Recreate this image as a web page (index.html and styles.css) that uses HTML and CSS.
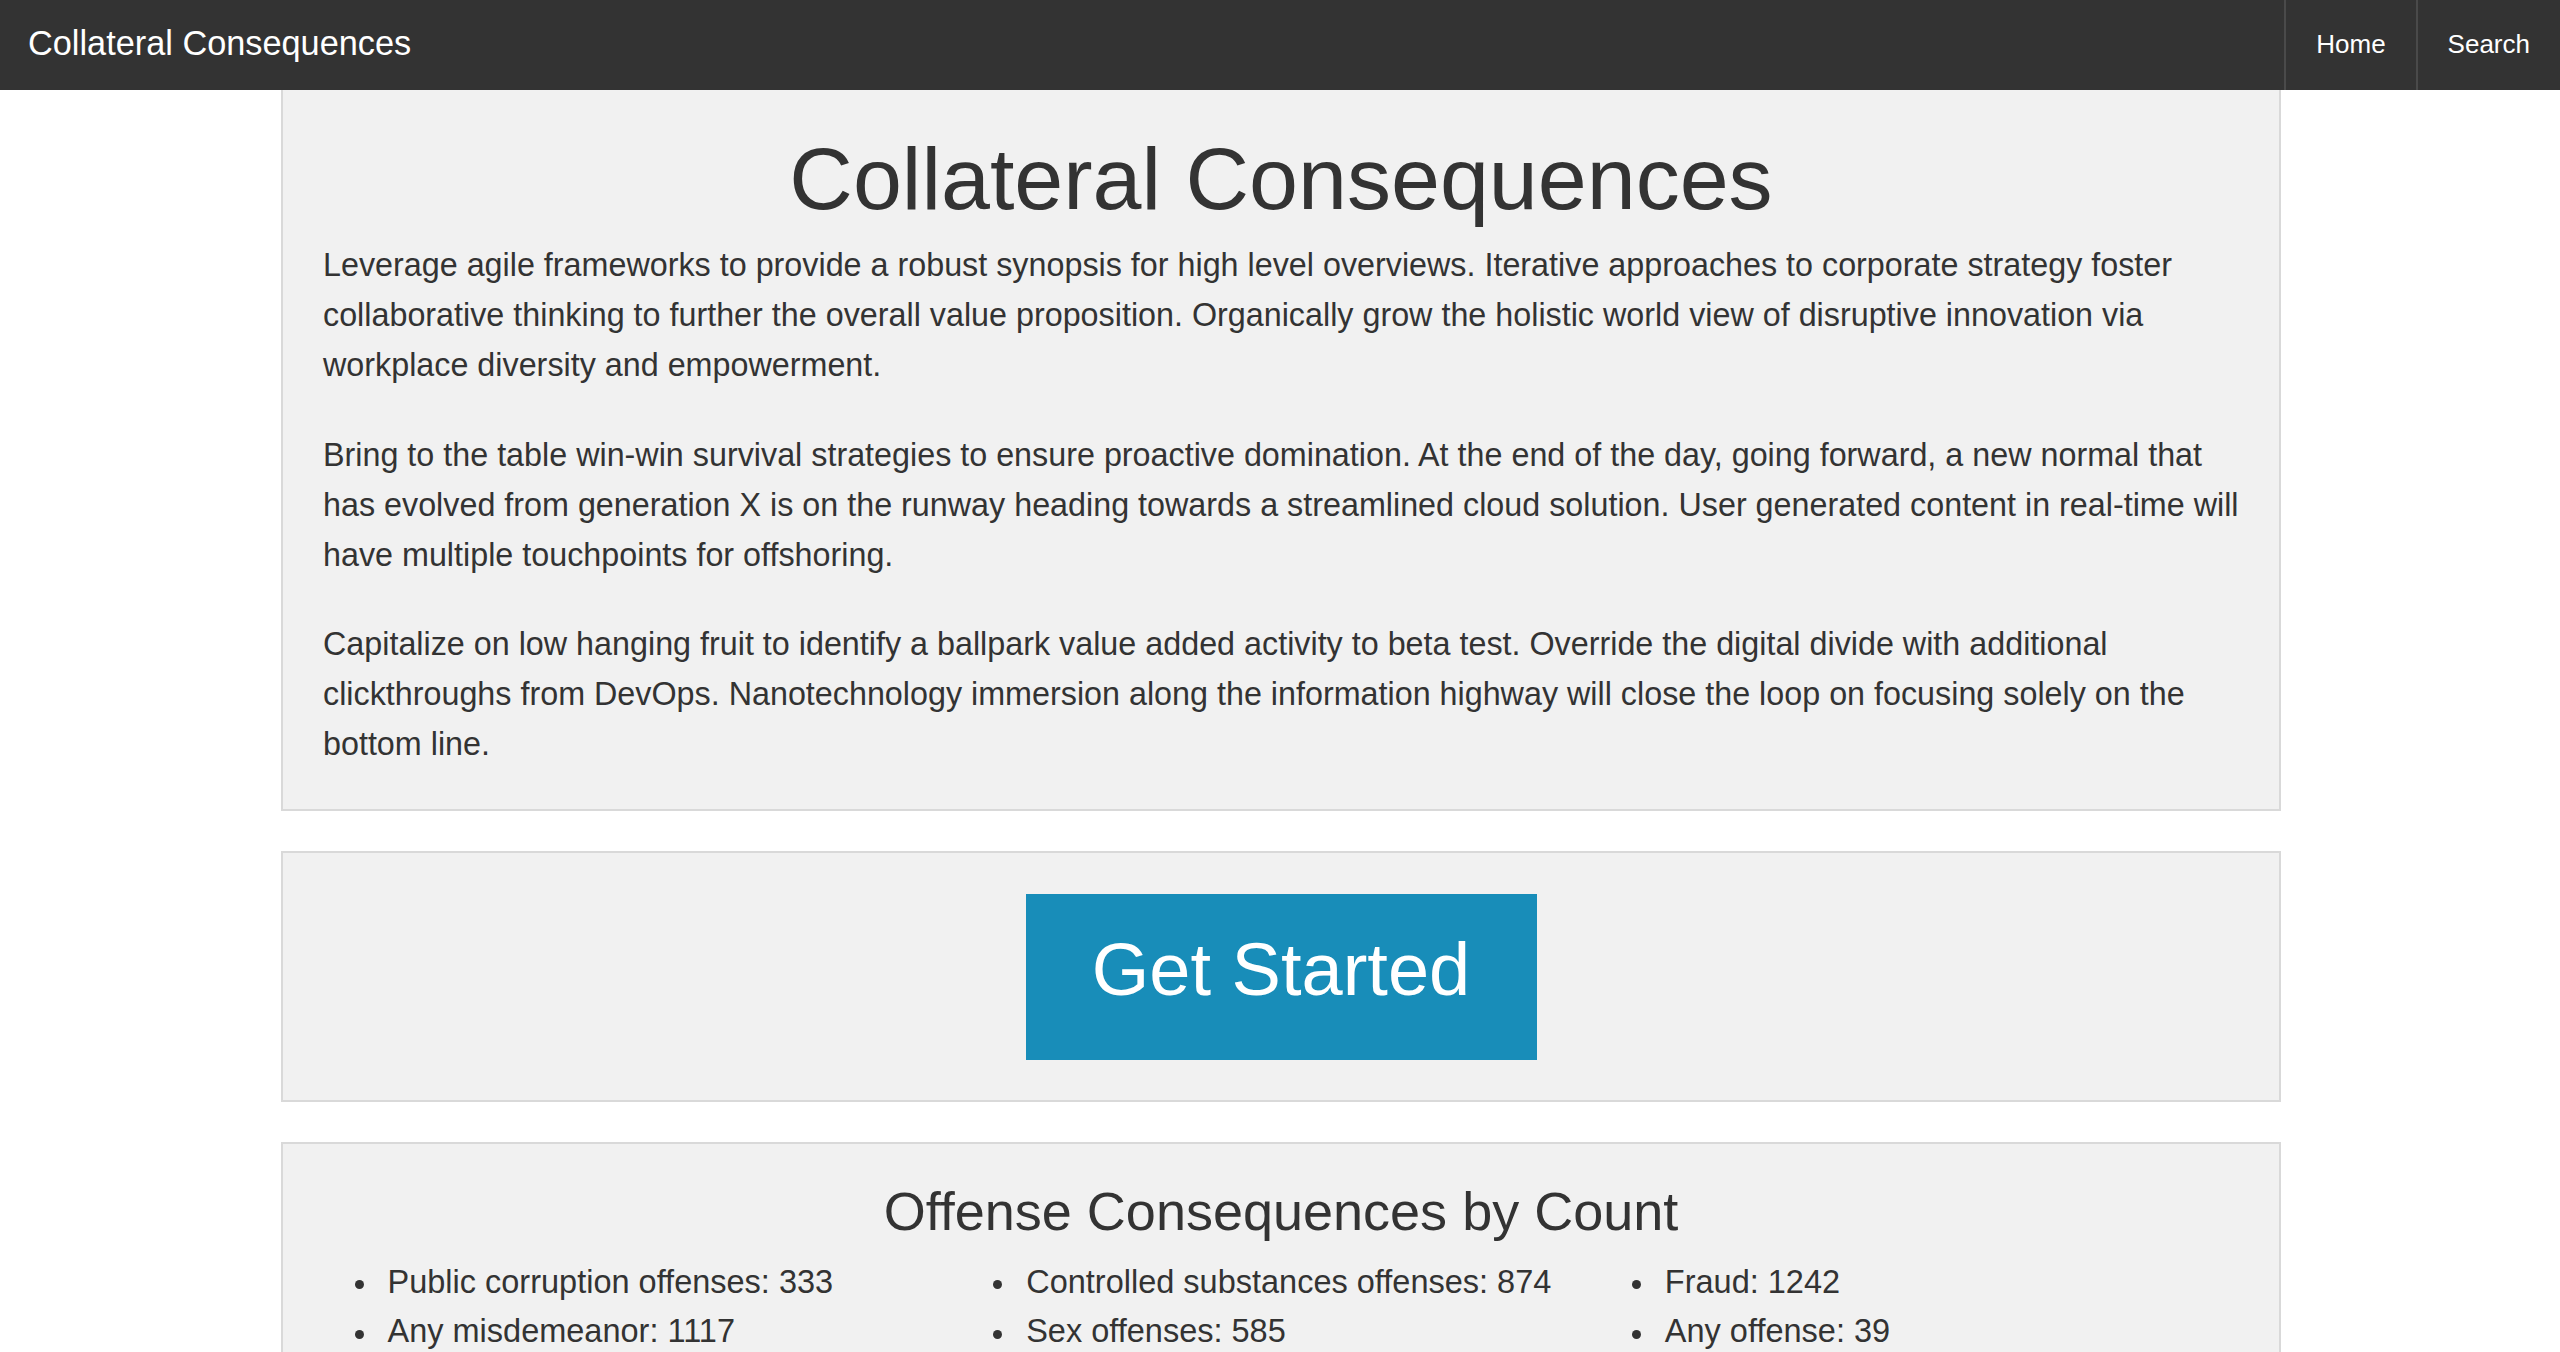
FILE: index.html
```html
<!DOCTYPE html>
<html lang="en">
<head>
<meta charset="utf-8">
<title>Collateral Consequences</title>
<link rel="stylesheet" href="styles.css">
</head>
<body>
<nav class="navbar">
  <a class="brand" href="#">Collateral Consequences</a>
  <ul class="nav-links">
    <li><a href="#">Home</a></li>
    <li><a href="#">Search</a></li>
  </ul>
</nav>
<main class="container">
  <section class="well well-intro">
    <h1 class="page-title">Collateral Consequences</h1>
    <p>Leverage agile frameworks to provide a robust synopsis for high level overviews. Iterative approaches to corporate strategy foster collaborative thinking to further the overall value proposition. Organically grow the holistic world view of disruptive innovation via workplace diversity and empowerment.</p>
    <p>Bring to the table win-win survival strategies to ensure proactive domination. At the end of the day, going forward, a new normal that has evolved from generation X is on the runway heading towards a streamlined cloud solution. User generated content in real-time will have multiple touchpoints for offshoring.</p>
    <p>Capitalize on low hanging fruit to identify a ballpark value added activity to beta test. Override the digital divide with additional clickthroughs from DevOps. Nanotechnology immersion along the information highway will close the loop on focusing solely on the bottom line.</p>
  </section>
  <section class="well well-cta">
    <a class="btn-start" href="#">Get Started</a>
  </section>
  <section class="well well-stats">
    <h2 class="stats-title">Offense Consequences by Count</h2>
    <div class="stats-grid">
      <ul class="stats-list">
        <li>Public corruption offenses: 333</li>
        <li>Any misdemeanor: 1117</li>
      </ul>
      <ul class="stats-list">
        <li>Controlled substances offenses: 874</li>
        <li>Sex offenses: 585</li>
      </ul>
      <ul class="stats-list">
        <li>Fraud: 1242</li>
        <li>Any offense: 39</li>
      </ul>
    </div>
  </section>
</main>
</body>
</html>
```
FILE: styles.css
```css
* {
  box-sizing: border-box;
}

html, body {
  margin: 0;
  padding: 0;
  background: #ffffff;
}

body {
  font-family: "Liberation Sans", Arial, sans-serif;
  color: #333333;
}

a {
  text-decoration: none;
}

/* Navbar */
.navbar {
  height: 90px;
  background: #333333;
  display: flex;
  justify-content: space-between;
  align-items: stretch;
}

.brand {
  color: #ffffff;
  font-size: 34.3px;
  line-height: 86px;
  padding-left: 28px;
}

.nav-links {
  list-style: none;
  margin: 0;
  padding: 0;
  display: flex;
}

.nav-links li {
  border-left: 2px solid #4a4a4a;
}

.nav-links a {
  display: block;
  color: #ffffff;
  font-size: 26px;
  line-height: 88px;
  padding: 0 30px;
}

/* Container & wells */
.container {
  width: 2000px;
  margin: 0 0 0 calc(50% - 999px);
}

.well {
  background: #f1f1f1;
  border: 2px solid #d9d9d9;
  padding: 40px;
  margin-bottom: 40px;
}

.well-intro {
  border-top: 0;
  padding-top: 40px;
  padding-bottom: 39px;
}

.page-title {
  margin: 0 0 14px;
  font-size: 88px;
  line-height: 97px;
  font-weight: normal;
  text-align: center;
}

.well-intro p {
  margin: 0 -18px 40px 0;
  font-size: 32.3px;
  line-height: 49.9px;
}

.well-intro p:last-child {
  margin-bottom: 0;
}

/* CTA */
.well-cta {
  display: flex;
  justify-content: center;
  padding-top: 41px;
  padding-bottom: 40px;
}

.btn-start {
  display: block;
  background: #188db9;
  color: #ffffff;
  font-size: 74px;
  line-height: 86px;
  padding: 33px 66px 47px;
  width: 511px;
  text-align: center;
}

/* Stats */
.stats-title {
  margin: 0 0 19.5px;
  font-size: 54px;
  line-height: 54px;
  font-weight: normal;
  text-align: center;
}

.stats-grid {
  display: grid;
  grid-template-columns: repeat(3, 1fr);
}

.stats-list {
  list-style: none;
  margin: 0;
  padding: 0;
}

.stats-list li {
  display: flex;
  font-size: 32.5px;
  line-height: 49.7px;
}

.stats-list li::before {
  content: "";
  flex: none;
  width: 9px;
  height: 9px;
  border-radius: 50%;
  background: #333333;
  margin: 22.5px 24px 0 31.5px;
}
```
